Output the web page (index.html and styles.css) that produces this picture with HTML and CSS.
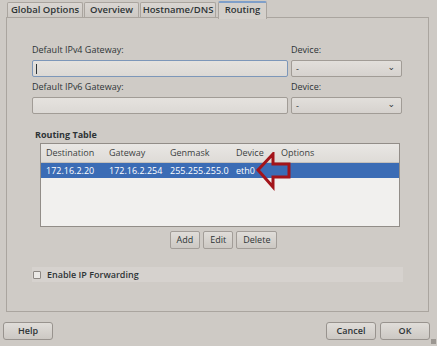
FILE: index.html
```html
<!DOCTYPE html>
<html lang="en">
  <head>
    <meta charset="UTF-8" />
    <title>Network Settings</title>
    <link rel="stylesheet" href="styles.css">
  </head>
  <body>
    <div class="dialog">
      <div class="tabs">
        <div class="tab">Global Options</div>
        <div class="tab">Overview</div>
        <div class="tab">Hostname/DNS</div>
        <div class="tab active">Routing</div>
      </div>
      <div class="panel">
        <div class="gw">
          <span class="label">Default IPv4 Gateway:</span>
          <span class="label">Device:</span>
          <div class="input focus"><span class="caret"></span></div>
          <div class="select"><span>-</span><span class="chev">&#8964;</span></div>
          <span class="label">Default IPv6 Gateway:</span>
          <span class="label">Device:</span>
          <div class="input"></div>
          <div class="select"><span>-</span><span class="chev">&#8964;</span></div>
        </div>
        <div class="section">Routing Table</div>
        <div class="table">
          <div class="row head">
            <span class="c1">Destination</span>
            <span class="c2">Gateway</span>
            <span class="c3">Genmask</span>
            <span class="c4">Device</span>
            <span class="c5">Options</span>
          </div>
          <div class="row sel">
            <span class="c1">172.16.2.20</span>
            <span class="c2">172.16.2.254</span>
            <span class="c3">255.255.255.0</span>
            <span class="c4">eth0</span>
            <span class="c5"></span>
          </div>
          <svg class="arrow" width="40" height="40" viewBox="0 0 40 40">
            <path d="M2 18 L17 2 L17 12 L33 12 L33 25 L17 25 L17 35 Z" fill="none" stroke="#a3141a" stroke-width="3" stroke-linejoin="miter"/>
          </svg>
        </div>
        <div class="tbtns">
          <div class="btn">Add</div>
          <div class="btn">Edit</div>
          <div class="btn">Delete</div>
        </div>
        <div class="check">
          <span class="box"></span>
          <span>Enable IP Forwarding</span>
        </div>
      </div>
      <div class="footer">
        <div class="btn big">Help</div>
        <div class="right">
          <div class="btn big">Cancel</div>
          <div class="btn big">OK</div>
        </div>
      </div>
      <div class="grip"></div>
    </div>
  </body>
</html>
```

FILE: styles.css
```css
body {
  margin: 0;
  background: #cecac5;
  font-family: "Open Sans", "DejaVu Sans", sans-serif;
  font-size: 9px;
  color: #2e3436;
  width: 437px;
  height: 346px;
  overflow: hidden;
}
.dialog {
  padding: 1px 8px 0 6px;
  position: relative;
  height: 345px;
}
.tabs {
  display: flex;
  height: 16px;
  padding-left: 1px;
}
.tab {
  box-sizing: border-box;
  height: 15px;
  margin-top: 1px;
  margin-right: 1px;
  line-height: 14px;
  text-align: center;
  white-space: nowrap;
  font-size: 9.5px;
  font-weight: 600;
  background: linear-gradient(#dad6d2, #cdc9c4);
  border: 1px solid #aaa59f;
  border-bottom: none;
  border-radius: 2px 2px 0 0;
}
.tab:nth-child(1) { width: 76px; }
.tab:nth-child(2) { width: 55px; }
.tab:nth-child(3) { width: 76px; }
.tab.active {
  width: 49px;
  height: 18px;
  margin-top: 0;
  margin-left: 1px;
  background: #d4d0cb;
  border-color: #aaa59f;
  border-top: 2px solid #7f9fc9;
  position: relative;
  z-index: 1;
  margin-bottom: -2px;
}
.panel {
  border: 1px solid #aaa59f;
  padding: 26px 25px 0 25px;
  box-sizing: border-box;
  height: 295px;
  background: #cfcbc6;
}
.gw {
  display: grid;
  grid-template-columns: 256px 111px;
  column-gap: 3px;
}
.label {
  height: 12px;
  line-height: 12px;
  margin-bottom: 4px;
}
.input, .select {
  height: 17px;
  box-sizing: border-box;
  border: 1px solid #a19c96;
  border-radius: 2px;
  background: linear-gradient(#e5e2de, #dcd9d5);
  margin-bottom: 4px;
}
.input.focus {
  border-color: #7d97b9;
}
.caret {
  display: block;
  width: 1px;
  height: 10px;
  margin: 3px 0 0 3px;
  background: #2e3436;
}
.select {
  display: flex;
  justify-content: space-between;
  align-items: center;
  padding: 0 6px 0 4px;
  background: linear-gradient(#e2dfdb, #d6d2ce);
}
.chev {
  font-size: 9px;
  line-height: 9px;
  margin-top: -5px;
}
.section {
  font-weight: 700;
  margin: 11px 0 2px 3px;
  line-height: 12px;
}
.table {
  margin: 0 3px 0 8px;
  height: 84px;
  box-sizing: border-box;
  border: 1px solid #928d88;
  background: #f1f0ee;
  position: relative;
}
.row {
  display: flex;
  height: 18px;
  line-height: 18px;
  padding-left: 5px;
  white-space: nowrap;
}
.row.head {
  background: linear-gradient(#e9e7e4, #dedbd7);
  border-bottom: 1px solid #c4c0bb;
  color: #3b3f41;
}
.row.sel {
  height: 15px;
  line-height: 15px;
  background: #3b6cb5;
  color: #ffffff;
}
.c1 { width: 63px; }
.c2 { width: 61px; }
.c3 { width: 66px; }
.c4 { width: 45px; }
.c5 { width: 50px; }
.arrow {
  position: absolute;
  left: 215px;
  top: 8px;
}
.tbtns {
  display: flex;
  justify-content: center;
  gap: 3px;
  margin-top: 4px;
  padding-left: 12px;
}
.btn {
  height: 18px;
  line-height: 16px;
  box-sizing: border-box;
  padding: 0 6px;
  border: 1px solid #a29d98;
  border-radius: 2px;
  background: linear-gradient(#e0ddd9, #ccc8c3);
  text-align: center;
  font-weight: 500;
}
.check {
  display: flex;
  align-items: center;
  gap: 6px;
  height: 15px;
  margin-top: 18px;
  padding-left: 1px;
  background: #d6d2ce;
  font-weight: 600;
}
.box {
  width: 6px;
  height: 6px;
  border: 1px solid #8d8883;
  background: #ebe9e6;
  border-radius: 1px;
}
.footer {
  display: flex;
  justify-content: space-between;
  margin-top: 10px;
  margin-left: -3px;
  margin-right: -1px;
}
.right {
  display: flex;
  gap: 4px;
}
.btn.big {
  width: 50px;
  height: 18px;
  font-weight: 600;
  border-color: #98938e;
  border-radius: 3px;
}
.grip {
  position: absolute;
  right: 1px;
  bottom: 2px;
  width: 5px;
  height: 5px;
  background: radial-gradient(circle, #8a857f 0.6px, transparent 1px) 0 0 / 2px 2px;
}
```
